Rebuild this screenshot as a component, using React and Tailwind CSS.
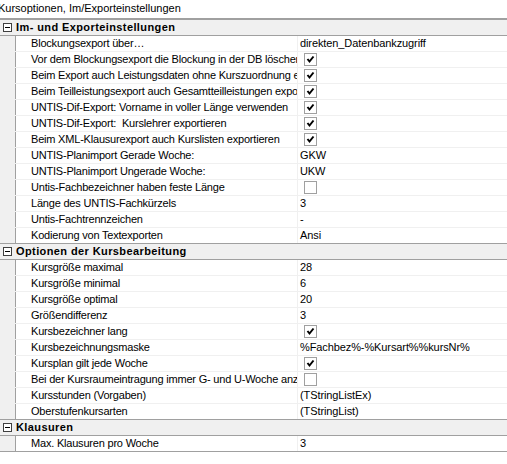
import React from "react";

const sections = [
  {
    title: "Im- und Exporteinstellungen",
    rows: [
      ["Blockungsexport über…", "direkten_Datenbankzugriff"],
      ["Vor dem Blockungsexport die Blockung in der DB löschen", true],
      ["Beim Export auch Leistungsdaten ohne Kurszuordnung exportieren", true],
      ["Beim Teilleistungsexport auch Gesamtteilleistungen exportieren", true],
      ["UNTIS-Dif-Export: Vorname in voller Länge verwenden", true],
      ["UNTIS-Dif-Export:  Kurslehrer exportieren", true],
      ["Beim XML-Klausurexport auch Kurslisten exportieren", true],
      ["UNTIS-Planimport Gerade Woche:", "GKW"],
      ["UNTIS-Planimport Ungerade Woche:", "UKW"],
      ["Untis-Fachbezeichner haben feste Länge", false],
      ["Länge des UNTIS-Fachkürzels", "3"],
      ["Untis-Fachtrennzeichen", "-"],
      ["Kodierung von Textexporten", "Ansi"],
    ],
  },
  {
    title: "Optionen der Kursbearbeitung",
    rows: [
      ["Kursgröße maximal", "28"],
      ["Kursgröße minimal", "6"],
      ["Kursgröße optimal", "20"],
      ["Größendifferenz", "3"],
      ["Kursbezeichner lang", true],
      ["Kursbezeichnungsmaske", "%Fachbez%-%Kursart%%kursNr%"],
      ["Kursplan gilt jede Woche", true],
      ["Bei der Kursraumeintragung immer G- und U-Woche anzeigen", false],
      ["Kursstunden (Vorgaben)", "(TStringListEx)"],
      ["Oberstufenkursarten", "(TStringList)"],
    ],
  },
  {
    title: "Klausuren",
    rows: [["Max. Klausuren pro Woche", "3"]],
  },
];

function CheckBox({ checked }) {
  return (
    <div className="ml-[4px] w-[13px] h-[13px] border border-[#a0a0a0] bg-white flex items-center justify-center">
      {checked && (
        <svg width="11" height="11" viewBox="0 0 11 11">
          <path d="M2.5 5 L4.5 7.5 L8.5 2.5" fill="none" stroke="#000" strokeWidth="2" />
        </svg>
      )}
    </div>
  );
}

function Header({ title }) {
  return (
    <div className="flex items-center h-[16px] bg-[#f0f0f0] border-b border-[#a0a0a0]">
      <div className="w-[16px] flex items-center">
        <div className="ml-[3px] w-[9px] h-[9px] border border-[#404040] bg-white flex items-center justify-center">
          <div className="w-[5px] h-[1px] bg-black" />
        </div>
      </div>
      <div className="font-bold leading-[15px] whitespace-nowrap tracking-[0.4px]">{title}</div>
    </div>
  );
}

function Row({ name, value, last }) {
  return (
    <div
      className={
        "flex h-[16px] border-b " + (last ? "border-[#a0a0a0]" : "border-[#f0f0f0]")
      }
    >
      <div className="w-[16px] shrink-0 bg-[#f0f0f0] border-r border-[#a0a0a0]" />
      <div className="w-[282px] shrink-0 pl-[15px] border-r border-[#f0f0f0] overflow-hidden whitespace-pre leading-[15px] tracking-[-0.2px]">
        {name}
      </div>
      <div className="flex-1 flex items-center pl-[2px] whitespace-pre leading-[15px] overflow-hidden tracking-[-0.1px]">
        {typeof value === "boolean" ? <CheckBox checked={value} /> : value}
      </div>
    </div>
  );
}

export default function App() {
  return (
    <div
      className="w-[507px] h-[464px] bg-white text-black text-[11px] overflow-hidden"
      style={{ fontFamily: '"Liberation Sans", Arial, sans-serif' }}
    >
      <div className="h-[18px] leading-[16px] ml-[-2px] whitespace-nowrap">
        Kursoptionen, Im/Exporteinstellungen
      </div>
      <div className="border-t-2 border-[#a0a0a0]">
        {sections.map((s, si) => (
          <div key={si}>
            <Header title={s.title} />
            {s.rows.map((r, ri) => (
              <Row key={ri} name={r[0]} value={r[1]} last={ri === s.rows.length - 1} />
            ))}
          </div>
        ))}
      </div>
    </div>
  );
}
